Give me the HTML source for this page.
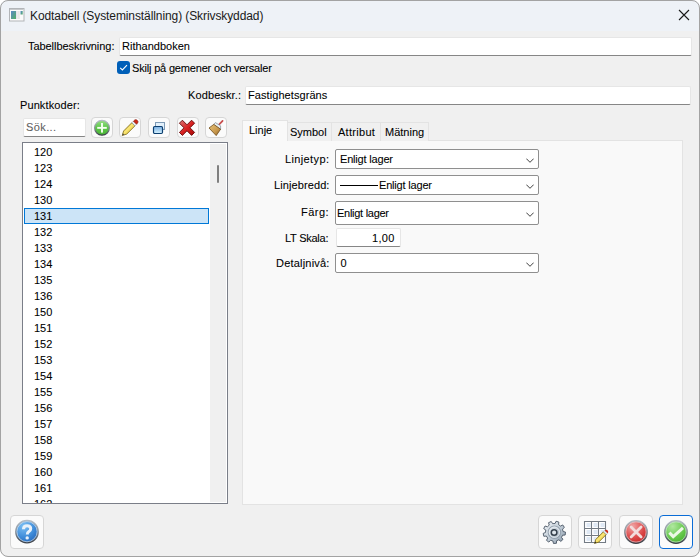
<!DOCTYPE html>
<html><head><meta charset="utf-8">
<style>
html,body{margin:0;padding:0;width:700px;height:557px;overflow:hidden;background:#ffffff;}
*{box-sizing:border-box;}
body{font-family:"Liberation Sans",sans-serif;font-size:12px;color:#000;}
.win{position:absolute;left:0;top:0;width:700px;height:557px;background:#f0f0f0;border-radius:8px;overflow:hidden;}
.frame{position:absolute;left:0;top:0;width:700px;height:557px;border:1px solid #a3a3a3;border-radius:8px;pointer-events:none;}
.ab{position:absolute;white-space:nowrap;}
.title{position:absolute;left:0;top:0;width:700px;height:31px;background:#eef2f7;}
.t{position:absolute;white-space:nowrap;line-height:14px;-webkit-text-stroke:0.08px currentColor;}
.inp{position:absolute;background:#fff;border:1px solid #e6e6e6;border-bottom:1px solid #868686;border-radius:2px;}
.btn{position:absolute;background:#fbfbfb;border:1px solid #d6d6d6;border-radius:4px;}
.combo{position:absolute;background:#fff;border:1px solid #8f8f8f;border-radius:2px;}
.chev{position:absolute;left:190px;top:7.6px;width:8px;height:5px;}
.list .row{position:absolute;left:11px;}
</style></head><body>
<div class="win">
  <div class="title">
    <svg class="ab" style="left:9px;top:8px" width="16" height="14" viewBox="0 0 16 14">
      <defs><linearGradient id="ig" x1="0" y1="0" x2="1" y2="1"><stop offset="0" stop-color="#5a88c8"/><stop offset="1" stop-color="#52b064"/></linearGradient></defs>
      <rect x="0.5" y="0.5" width="14.5" height="12.5" fill="#fbfbfb" stroke="#b2b5b8"/>
      <rect x="1" y="1" width="13.5" height="1" fill="#c8cacc"/>
      <rect x="2" y="3" width="5" height="8" fill="url(#ig)"/>
      <rect x="7" y="3" width="0.6" height="8" fill="#d8d0e8"/>
      <rect x="8.2" y="3" width="2.6" height="8" fill="#e6e6e6"/>
      <rect x="11.5" y="3" width="2.2" height="3.5" fill="url(#ig)"/>
    </svg>
    <svg class="ab" style="left:678px;top:9px" width="12" height="12" viewBox="0 0 12 12"><path d="M1 1L11 11M11 1L1 11" stroke="#1a1a1a" stroke-width="1.1"/></svg>
  </div>

  <div class="inp" style="left:119px;top:37px;width:573px;height:19px"></div>

  <div class="ab" style="left:117px;top:61px;width:13px;height:13px;background:#005fb8;border-radius:3px"></div>
  <svg class="ab" style="left:117px;top:61px" width="13" height="13" viewBox="0 0 13 13"><path d="M3.2 6.8L5.4 9L10 4.2" fill="none" stroke="#fff" stroke-width="1.1"/></svg>

  <div class="inp" style="left:245px;top:86px;width:446px;height:19px"></div>

  <!-- search -->
  <div class="inp" style="left:23px;top:118px;width:63px;height:19px"></div>

  <!-- toolbar buttons -->
  <svg width="0" height="0" style="position:absolute">
    <defs>
      <linearGradient id="gGreen" x1="0" y1="0" x2="0" y2="1"><stop offset="0" stop-color="#9ade8a"/><stop offset="0.45" stop-color="#62c84e"/><stop offset="1" stop-color="#46b432"/></linearGradient>
      <linearGradient id="gRing" x1="0" y1="0" x2="0" y2="1"><stop offset="0" stop-color="#b4bcc4"/><stop offset="0.5" stop-color="#8a939c"/><stop offset="1" stop-color="#3c4148"/></linearGradient>
      <linearGradient id="gYellow" x1="0" y1="0" x2="1" y2="0" gradientTransform="rotate(45 .5 .5)"><stop offset="0" stop-color="#c9a010"/><stop offset="0.45" stop-color="#fbe878"/><stop offset="1" stop-color="#d8b21c"/></linearGradient>
      <linearGradient id="gBlueRect" x1="0" y1="0" x2="0" y2="1"><stop offset="0" stop-color="#78ade2"/><stop offset="1" stop-color="#d8f4ff"/></linearGradient>
      <linearGradient id="gRedX" x1="0" y1="0" x2="1" y2="1"><stop offset="0" stop-color="#d87878"/><stop offset="0.5" stop-color="#d82222"/><stop offset="1" stop-color="#a80808"/></linearGradient>
      <linearGradient id="gBroom" x1="0" y1="0" x2="1" y2="1"><stop offset="0" stop-color="#e8c47a"/><stop offset="0.6" stop-color="#c8984c"/><stop offset="1" stop-color="#8c6024"/></linearGradient>
      <radialGradient id="gBlueC" cx="0.35" cy="0.25" r="0.85"><stop offset="0" stop-color="#7cc0f4"/><stop offset="0.6" stop-color="#3d8ad8"/><stop offset="1" stop-color="#2462b4"/></radialGradient>
      <radialGradient id="gRedC" cx="0.35" cy="0.25" r="0.85"><stop offset="0" stop-color="#f0a4a4"/><stop offset="0.6" stop-color="#dc4848"/><stop offset="1" stop-color="#c02222"/></radialGradient>
      <radialGradient id="gGreenC" cx="0.35" cy="0.25" r="0.85"><stop offset="0" stop-color="#b0e8a0"/><stop offset="0.6" stop-color="#66c84c"/><stop offset="1" stop-color="#44b02c"/></radialGradient>
      <linearGradient id="gGear" x1="0" y1="0" x2="1" y2="1"><stop offset="0" stop-color="#f4f7fa"/><stop offset="0.5" stop-color="#c3ced8"/><stop offset="1" stop-color="#8898a8"/></linearGradient>
    </defs>
  </svg>
  <div class="btn" style="left:91px;top:117px;width:22px;height:21px"></div>
  <svg class="ab" style="left:91px;top:117px" width="22" height="21" viewBox="0 0 22 21">
    <circle cx="11" cy="10.8" r="7.4" fill="url(#gGreen)" stroke="url(#gRing)" stroke-width="1.2"/>
    <rect x="6.2" y="9.9" width="9.6" height="1.9" fill="#f6fff2"/>
    <rect x="10.05" y="6" width="1.9" height="9.6" fill="#f6fff2"/>
  </svg>
  <div class="btn" style="left:119px;top:117px;width:22px;height:21px"></div>
  <svg class="ab" style="left:119px;top:117px" width="22" height="21" viewBox="0 0 22 21">
    <path d="M3.2 18.5 L4.64 13.94 L12.84 5.74 L15.96 8.86 L7.76 17.06 Z" fill="url(#gYellow)" stroke="#7a6410" stroke-width="0.8" stroke-linejoin="round"/>
    <path d="M3.2 18.5 L3.9 16.2 L5.5 17.8 Z" fill="#505050"/>
    <path d="M12.84 5.74 L14.44 4.14 L17.56 7.26 L15.96 8.86 Z" fill="#eef2f4" stroke="#8c98a2" stroke-width="0.6"/>
    <path d="M14.44 4.14 L15.6 3 Q17 2 18.4 3.4 Q19.8 4.8 18.7 6.1 L17.56 7.26 Z" fill="#cc2a18" stroke="#7a1a10" stroke-width="0.5"/>
  </svg>
  <div class="btn" style="left:148px;top:117px;width:22px;height:21px"></div>
  <svg class="ab" style="left:148px;top:117px" width="22" height="21" viewBox="0 0 22 21">
    <rect x="7.5" y="5.5" width="9" height="7" fill="#e2f0fb" stroke="#0d3f70" stroke-width="1" stroke-dasharray="1 1"/>
    <rect x="5.5" y="9.5" width="9" height="7" rx="1.2" fill="url(#gBlueRect)" stroke="#0d3f70" stroke-width="1.2"/>
  </svg>
  <div class="btn" style="left:177px;top:117px;width:22px;height:21px"></div>
  <svg class="ab" style="left:177px;top:117px" width="22" height="21" viewBox="0 0 22 21">
    <path d="M2.4 6.2 L5.4 3.2 L10 7.8 L14.6 3.2 L17.6 6.2 L13 10.8 L17.6 15.4 L14.6 18.4 L10 13.8 L5.4 18.4 L2.4 15.4 L7 10.8 Z" fill="url(#gRedX)" stroke="#640606" stroke-width="0.9" stroke-linejoin="miter"/>
  </svg>
  <div class="btn" style="left:205px;top:117px;width:22px;height:21px"></div>
  <svg class="ab" style="left:205px;top:117px" width="22" height="21" viewBox="0 0 22 21">
    <path d="M14.2 7.4 L17.6 3.8" stroke="#c44848" stroke-width="1.7" stroke-linecap="round"/>
    <path d="M14.6 6.9 L17.2 4.2" stroke="#f0a0a0" stroke-width="0.5" stroke-dasharray="0.6 0.8"/>
    <path d="M8.6 7.6 L10.4 5.6 L15.6 8.8 L15.6 12.4 Z" fill="#eaf0f4" stroke="#7a8894" stroke-width="0.7"/>
    <path d="M4 11 L8.8 7.4 L15.6 12.2 L11.2 18.6 Z" fill="url(#gBroom)" stroke="#6e4a18" stroke-width="0.8" stroke-linejoin="round"/>
  </svg>

  <!-- list -->
  <div class="ab list" style="left:22px;top:142px;width:206px;height:362px;background:#fff;border:1px solid #7a7e88;overflow:hidden">
    <div class="ab" style="left:187px;top:1px;width:16px;height:358px;background:#f0f0f0"></div>
    <div class="ab" style="left:194px;top:22px;width:2px;height:18px;background:#7f7f7f;border-radius:1px"></div>
    <div class="ab" style="left:1px;top:65px;width:185px;height:16px;background:#cce4f7;border:1px solid #0078d7"></div>
    <div class="t" style="left:11px;top:2px;font-size:11px;letter-spacing:0.000px">120</div>
    <div class="t" style="left:11px;top:18px;font-size:11px;letter-spacing:0.000px">123</div>
    <div class="t" style="left:11px;top:34px;font-size:11px;letter-spacing:0.000px">124</div>
    <div class="t" style="left:11px;top:50px;font-size:11px;letter-spacing:0.000px">130</div>
    <div class="t" style="left:11px;top:66px;font-size:11px;letter-spacing:0.000px">131</div>
    <div class="t" style="left:11px;top:82px;font-size:11px;letter-spacing:0.000px">132</div>
    <div class="t" style="left:11px;top:98px;font-size:11px;letter-spacing:0.000px">133</div>
    <div class="t" style="left:11px;top:114px;font-size:11px;letter-spacing:0.000px">134</div>
    <div class="t" style="left:11px;top:130px;font-size:11px;letter-spacing:0.000px">135</div>
    <div class="t" style="left:11px;top:146px;font-size:11px;letter-spacing:0.000px">136</div>
    <div class="t" style="left:11px;top:162px;font-size:11px;letter-spacing:0.000px">150</div>
    <div class="t" style="left:11px;top:178px;font-size:11px;letter-spacing:0.000px">151</div>
    <div class="t" style="left:11px;top:194px;font-size:11px;letter-spacing:0.000px">152</div>
    <div class="t" style="left:11px;top:210px;font-size:11px;letter-spacing:0.000px">153</div>
    <div class="t" style="left:11px;top:226px;font-size:11px;letter-spacing:0.000px">154</div>
    <div class="t" style="left:11px;top:242px;font-size:11px;letter-spacing:0.000px">155</div>
    <div class="t" style="left:11px;top:258px;font-size:11px;letter-spacing:0.000px">156</div>
    <div class="t" style="left:11px;top:274px;font-size:11px;letter-spacing:0.000px">157</div>
    <div class="t" style="left:11px;top:290px;font-size:11px;letter-spacing:0.000px">158</div>
    <div class="t" style="left:11px;top:306px;font-size:11px;letter-spacing:0.000px">159</div>
    <div class="t" style="left:11px;top:322px;font-size:11px;letter-spacing:0.000px">160</div>
    <div class="t" style="left:11px;top:338px;font-size:11px;letter-spacing:0.000px">161</div>
    <div class="t" style="left:11px;top:354px;font-size:11px;letter-spacing:0.000px">162</div>
  </div>

  <!-- tabs -->
  <div class="ab" style="left:242px;top:140px;width:441px;height:365px;background:#f9f9f9;border:1px solid #e3e3e3"></div>
  <div class="ab" style="left:287px;top:122px;width:45px;height:19px;background:#f0f0f0;border:1px solid #e3e3e3;border-bottom:none"></div>
  <div class="ab" style="left:331px;top:122px;width:50px;height:19px;background:#f0f0f0;border:1px solid #e3e3e3;border-bottom:none"></div>
  <div class="ab" style="left:380px;top:122px;width:49px;height:19px;background:#f0f0f0;border:1px solid #e3e3e3;border-bottom:none"></div>
  <div class="ab" style="left:242px;top:120px;width:46px;height:21px;background:#f9f9f9;border:1px solid #e3e3e3;border-bottom:none"></div>

  <!-- form -->
  <div class="combo" style="left:335px;top:149px;width:204px;height:20px"><svg class="chev" viewBox="0 0 8 5"><path d="M0.3 0.6L4 4.3L7.7 0.6" fill="none" stroke="#404040" stroke-width="1"/></svg></div>

  <div class="combo" style="left:335px;top:175px;width:204px;height:20px"><svg class="chev" viewBox="0 0 8 5"><path d="M0.3 0.6L4 4.3L7.7 0.6" fill="none" stroke="#404040" stroke-width="1"/></svg></div>
  <div class="ab" style="left:340px;top:185px;width:38px;height:1px;background:#000"></div>

  <div class="combo" style="left:335px;top:201px;width:204px;height:24px"><svg class="chev" style="top:9.6px" viewBox="0 0 8 5"><path d="M0.3 0.6L4 4.3L7.7 0.6" fill="none" stroke="#404040" stroke-width="1"/></svg></div>

  <div class="inp" style="left:336px;top:228px;width:65px;height:19px"></div>

  <div class="combo" style="left:335px;top:253px;width:204px;height:20px"><svg class="chev" viewBox="0 0 8 5"><path d="M0.3 0.6L4 4.3L7.7 0.6" fill="none" stroke="#404040" stroke-width="1"/></svg></div>

  <!-- bottom buttons -->
  <div class="btn" style="left:10px;top:515px;width:34px;height:34px"></div>
  <svg class="ab" style="left:10px;top:515px" width="34" height="34" viewBox="0 0 34 34">
    <circle cx="17" cy="16.7" r="11.2" fill="url(#gBlueC)" stroke="url(#gRing)" stroke-width="1.4"/>
    <circle cx="17" cy="16.7" r="10.1" fill="none" stroke="#dfe6ec" stroke-width="0.8" opacity="0.8"/>
    <path d="M13.5 14.2 Q13.5 10.7 17.1 10.7 Q20.7 10.7 20.7 13.7 Q20.7 15.7 18.8 16.7 Q17.3 17.5 17.3 19.5" fill="none" stroke="#eaf2fa" stroke-width="3"/>
    <circle cx="17.2" cy="22.9" r="1.7" fill="#eaf2fa"/>
  </svg>
  <div class="btn" style="left:538px;top:515px;width:34px;height:34px"></div>
  <svg class="ab" style="left:538px;top:515px" width="34" height="34" viewBox="0 0 34 34">
    <path d="M17.07 8.53 L18.05 6.24 L20.89 7.08 L20.57 9.60 L22.52 11.08 L24.75 9.95 L26.38 12.43 L24.52 14.15 L25.07 16.53 L27.50 17.10 L27.16 20.05 L24.62 20.16 L23.51 22.35 L25.00 24.35 L22.85 26.38 L20.83 24.84 L18.58 25.80 L18.44 28.29 L15.48 28.47 L14.92 25.99 L12.58 25.28 L10.87 27.10 L8.49 25.33 L9.66 23.07 L8.32 21.02 L5.84 21.31 L5.16 18.43 L7.50 17.45 L7.80 15.02 L5.71 13.65 L7.04 11.00 L9.46 11.76 L11.25 10.09 L10.53 7.70 L13.25 6.52 L14.62 8.66 Z" fill="url(#gGear)" stroke="#4a5664" stroke-width="0.9" stroke-linejoin="round"/>
    <circle cx="16.4" cy="17.2" r="6.2" fill="none" stroke="#8f9caa" stroke-width="1.1" opacity="0.9"/>
    <circle cx="16.4" cy="17.2" r="5.2" fill="none" stroke="#f2f6f9" stroke-width="0.8" opacity="0.9"/>
    <circle cx="16.1" cy="17.5" r="2.8" fill="#dfe6ec" stroke="#36414c" stroke-width="1.5"/>
  </svg>
  <div class="btn" style="left:578px;top:515px;width:34px;height:34px"></div>
  <svg class="ab" style="left:578px;top:515px" width="34" height="34" viewBox="0 0 34 34">
    <rect x="6.5" y="6" width="21.5" height="21.5" fill="#fff"/>
    <g fill="#dfe9f5">
      <rect x="8.5" y="8" width="4" height="4"/><rect x="15.5" y="8" width="4" height="4"/><rect x="22.5" y="8" width="4" height="4"/>
      <rect x="8.5" y="15" width="4" height="4"/><rect x="15.5" y="15" width="4" height="4"/><rect x="22.5" y="15" width="4" height="4"/>
      <rect x="8.5" y="22" width="4" height="4"/><rect x="15.5" y="22" width="4" height="4"/>
    </g>
    <path d="M6.5 6.5 H27.5 V27.5 H6.5 Z M13.5 6.5 V27.5 M20.5 6.5 V27.5 M6.5 13.5 H27.5 M6.5 20.5 H27.5" fill="none" stroke="#737b84" stroke-width="1.1"/>
    <path d="M16.5 28.4 L17.8 24.4 L25.4 16.8 L28.2 19.6 L20.6 27.2 Z" fill="url(#gYellow)" stroke="#7a6410" stroke-width="0.8" stroke-linejoin="round"/>
    <path d="M16.5 28.4 L17.1 26.3 L18.6 27.8 Z" fill="#333"/>
    <path d="M25.4 16.8 L26.8 15.4 L29.6 18.2 L28.2 19.6 Z" fill="#eef2f4" stroke="#8c98a2" stroke-width="0.5"/>
    <path d="M26.8 15.4 Q28.3 14 29.7 15.4 Q31 16.8 29.6 18.2 Z" fill="#d02a18"/>
  </svg>
  <div class="btn" style="left:619px;top:515px;width:34px;height:34px"></div>
  <svg class="ab" style="left:619px;top:515px" width="34" height="34" viewBox="0 0 34 34">
    <circle cx="17" cy="17" r="11.2" fill="url(#gRedC)" stroke="url(#gRing)" stroke-width="1.4"/>
    <circle cx="17" cy="17" r="10.1" fill="none" stroke="#dfe6ec" stroke-width="0.8" opacity="0.7"/>
    <path d="M12.1 12.1 L22.1 22.1 M22.1 12.1 L12.1 22.1" stroke="#f2dcdc" stroke-width="2.8" stroke-linecap="round"/>
  </svg>
  <div class="btn" style="left:659px;top:515px;width:34px;height:34px;border:1px solid #0a6cd6"></div>
  <svg class="ab" style="left:659px;top:515px" width="34" height="34" viewBox="0 0 34 34">
    <circle cx="17" cy="17" r="11.2" fill="url(#gGreenC)" stroke="url(#gRing)" stroke-width="1.4"/>
    <circle cx="17" cy="17" r="10.1" fill="none" stroke="#dfe6ec" stroke-width="0.8" opacity="0.7"/>
    <path d="M10.4 17.6 L14.2 21.6 L24 12.8" fill="none" stroke="#ecf8e6" stroke-width="3"/>
  </svg>
</div>
<div class="t" style="left:30px;top:9px;font-size:12px;letter-spacing:-0.093px;color:#1a1a1a;-webkit-text-stroke:0">Kodtabell (Systeminställning) (Skrivskyddad)</div>
<div class="t" style="left:28px;top:39px;font-size:11px;letter-spacing:-0.059px">Tabellbeskrivning:</div>
<div class="t" style="left:122px;top:39px;font-size:11px;letter-spacing:0.000px">Rithandboken</div>
<div class="t" style="left:132px;top:61px;font-size:11px;letter-spacing:-0.179px">Skilj på gemener och versaler</div>
<div class="t" style="left:20px;top:98px;font-size:11px;letter-spacing:0.100px">Punktkoder:</div>
<div class="t" style="left:188px;top:88px;font-size:11px;letter-spacing:0.111px">Kodbeskr.:</div>
<div class="t" style="left:248px;top:88px;font-size:11px;letter-spacing:0.071px">Fastighetsgräns</div>
<div class="t" style="left:26px;top:120px;font-size:11px;letter-spacing:0.400px;color:#5f5f5f">Sök...</div>
<div class="t" style="left:249px;top:123px;font-size:11px;letter-spacing:0.000px">Linje</div>
<div class="t" style="left:290px;top:125px;font-size:11px;letter-spacing:0.000px">Symbol</div>
<div class="t" style="left:338px;top:125px;font-size:11px;letter-spacing:0.286px">Attribut</div>
<div class="t" style="left:385px;top:125px;font-size:11px;letter-spacing:0.000px">Mätning</div>
<div class="t" style="left:285px;top:152px;font-size:11px;letter-spacing:0.375px">Linjetyp:</div>
<div class="t" style="left:340px;top:152px;font-size:11px;letter-spacing:-0.182px">Enligt lager</div>
<div class="t" style="left:274px;top:178px;font-size:11px;letter-spacing:0.100px">Linjebredd:</div>
<div class="t" style="left:379px;top:178px;font-size:11px;letter-spacing:-0.182px">Enligt lager</div>
<div class="t" style="left:301px;top:205px;font-size:11px;letter-spacing:0.500px">Färg:</div>
<div class="t" style="left:337px;top:206px;font-size:11px;letter-spacing:-0.273px">Enligt lager</div>
<div class="t" style="left:285px;top:231px;font-size:11px;letter-spacing:-0.250px">LT Skala:</div>
<div class="t" style="left:372px;top:231px;font-size:11px;letter-spacing:0.333px">1,00</div>
<div class="t" style="left:276px;top:256px;font-size:11px;letter-spacing:0.200px">Detaljnivå:</div>
<div class="t" style="left:340.5px;top:256px;font-size:11px;letter-spacing:0.000px">0</div>
<div class="frame"></div>
</body></html>
